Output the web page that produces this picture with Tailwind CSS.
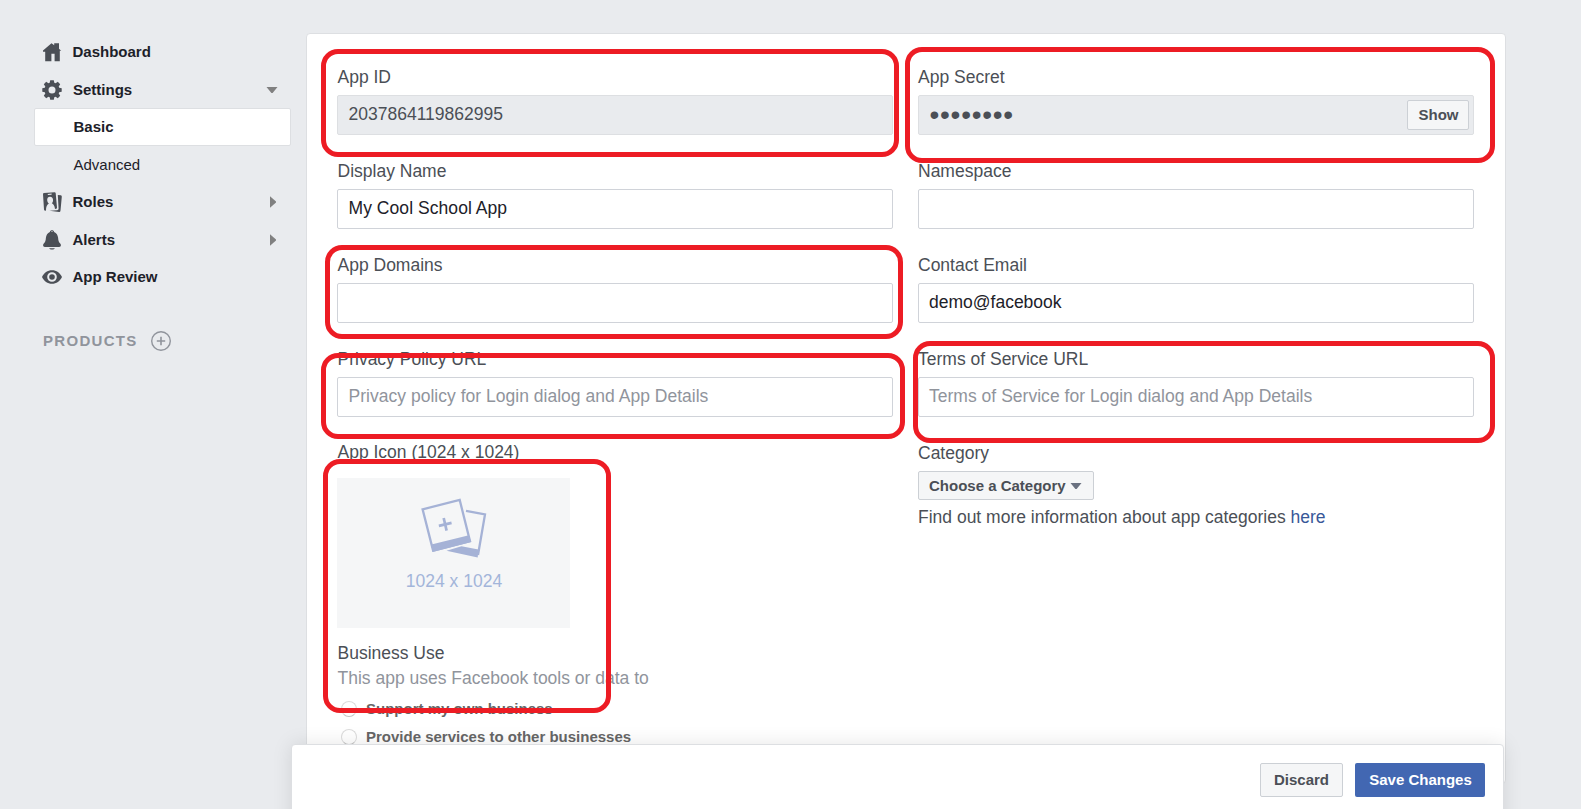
<!DOCTYPE html>
<html lang="en">
<head>
<meta charset="utf-8">
<title>App Settings</title>
<script src="https://cdn.jsdelivr.net/npm/@tailwindcss/browser@4"></script>
</head>
<body class="relative h-[809px] w-[1581px] overflow-hidden bg-[#e9ebee] font-['Liberation_Sans',Arial,sans-serif] text-[17.5px] leading-6 text-[#4b4f56]">
<div class="flex items-start pt-[33px]">
  <!-- Sidebar -->
  <nav class="ml-[34px] w-[272px] shrink-0 text-[15px] font-bold text-[#1d2129]">
    <a class="flex h-[38px] items-center pl-2">
      <svg class="mr-[10.5px] h-5 w-5" viewBox="0 0 20 20" fill="#4b4f56"><path d="M9.5 1.2 L12.2 3.2 V1.2 H17 V6.7 L19.2 8.8 H17.800 V19.3 H12.6 V11.8 H9.4 V19.3 H3.2 V9.8 H1 V8.6 Z"/></svg>
      <span>Dashboard</span>
    </a>
    <a class="flex h-[37px] items-center pt-px pl-2">
      <svg class="mr-[11px] h-5 w-5" viewBox="0 0 20 20" fill="#4b4f56"><path fill-rule="evenodd" d="M8.2 0.3h3.6l.5 2.5 1.3.5 2.2-1.5 2.4 2.4-1.5 2.2.5 1.3 2.5.5v3.600l-2.5.5-.5 1.3 1.5 2.2-2.4 2.4-2.2-1.5-1.3.5-.5 2.5H8.2l-.5-2.5-1.3-.5-2.2 1.500-2.4-2.4 1.5-2.2-.5-1.3-2.5-.5V8.2l2.5-.5.5-1.3-1.5-2.2 2.4-2.4 2.2 1.5 1.3-.5zM10 6.5a3.5 3.5 0 1 0 0 7 3.5 3.5 0 0 0 0-7z"/></svg>
      <span>Settings</span>
      <svg class="mr-[28px] ml-auto h-[6px] w-[12px]" viewBox="0 0 12 6" fill="#808080"><path d="M.5 0h11L6.6 6H5.4z"/></svg>
    </a>
    <a class="flex h-[38px] w-[257px] items-center rounded-[2px] border border-[#dddfe2] bg-white pl-[38.5px]">Basic</a>
    <a class="flex h-[37px] items-center pl-[39.500px] font-normal">Advanced</a>
    <a class="flex h-[37px] items-center pt-px pl-2">
      <svg class="mr-[10.5px] h-5 w-5" viewBox="0 0 20 20" fill="#4b4f56"><path fill-rule="evenodd" d="M2 1 12.600.2Q13.600.2 13.700 1.200L15 15.400Q15 16.600 14 16.800L13 17C12.600 13.600 11.500 11.900 9.800 11.200 10.900 10.200 11.200 8.800 11 7.400 10.700 5.500 9.500 4.600 7.900 4.700 6 4.900 5 6.200 5.200 8.200 5.300 9.700 6 10.900 6.900 11.500 5 12.500 4 14.500 4 18.600L3.200 18.700Q2.100 18.800 2 17.600L1 2.200Q1 1.100 2 1zM5.800 1.900V3L9.600 2.700V1.600z"/><path d="M15.800 3 18.800 3.300Q19.900 3.600 19.800 4.700L18.500 18.400Q18.300 20 17.200 19.900L7.500 18.800 15.200 18.300Q16.600 18 16.600 16.700z"/></svg>
      <span>Roles</span>
      <svg class="mr-[30px] ml-auto h-[12px] w-[6px]" viewBox="0 0 6 12" fill="#808080"><path d="M0 .3 6 5.5v1L0 11.7z"/></svg>
    </a>
    <a class="flex h-[38px] items-center pt-[2px] pl-2">
      <svg class="mr-[10.5px] h-5 w-5" viewBox="0 0 20 20" fill="#4b4f56"><path fill-rule="evenodd" d="M7.900 2C7.900-.3 12.100-.3 12.100 2 14.600 3 15.800 5.3 16.100 7.800 16.300 10.800 16.800 12 18.2 13.600 19.600 15.200 18.700 17 17.2 17H2.800C1.3 17 .4 15.200 1.800 13.600 3.200 12 3.700 10.800 3.900 7.800 4.200 5.300 5.400 3 7.900 2zM9.100 1.900H10.900C10.900 1 9.100 1 9.100 1.900z"/><path d="M7.200 18.200H12.800C12.500 20 7.500 20 7.200 18.200z"/></svg>
      <span>Alerts</span>
      <svg class="mr-[30px] ml-auto h-[12px] w-[6px]" viewBox="0 0 6 12" fill="#808080"><path d="M0 .3 6 5.5v1L0 11.7z"/></svg>
    </a>
    <a class="flex h-[37px] items-center pl-2">
      <svg class="mr-[10.5px] h-5 w-5" viewBox="0 0 20 20" fill="#4b4f56"><path fill-rule="evenodd" d="M0 10C2 5.800 5.500 3.200 10 3.200S18 5.800 20 10C18 14.200 14.500 16.800 10 16.800S2 14.200 0 10zM10 5.200a4.800 4.800 0 1 0 0 9.600 4.800 4.800 0 0 0 0-9.600z"/><circle cx="10" cy="10" r="2.800"/></svg>
      <span>App Review</span>
    </a>
    <div class="mt-[27px] flex h-[38px] items-center pl-[9px] text-[#90949c]">
      <span class="tracking-[1.3px]">PRODUCTS</span>
      <svg class="ml-[13.500px] h-5 w-5" viewBox="0 0 20 20" fill="none" stroke="#90949c"><circle cx="10" cy="10" r="9.300" stroke-width="1.400"/><path d="M10 5.800v8.400M5.800 10h8.400" stroke-width="1.600"/></svg>
    </div>
  </nav>

  <!-- Settings form -->
  <main class="h-[751px] w-[1200px] shrink-0 rounded-[4px] border border-[#dddfe2] bg-white pt-[31px] pl-[30px]">
    <div class="grid grid-cols-[556px_556px] gap-x-[25px]">
      <div class="h-[94px]">
        <div class="pl-[0.5px]">App ID</div>
        <div class="mt-[6px] flex h-10 items-center rounded-[2px] border border-[#dddfe2] bg-[#e9ebee] pb-[2px] pl-[10.5px]">2037864119862995</div>
      </div>
      <div class="h-[94px]">
        <div>App Secret</div>
        <div class="mt-[6px] flex h-10 items-center justify-between rounded-[2px] border border-[#dddfe2] bg-[#e9ebee] pr-1 pl-[10.500px]">
          <span class="text-[28px] tracking-[0.75px]">••••••••</span>
          <span class="flex h-[30px] w-[62px] items-center justify-center rounded-[2px] border border-[#ccd0d5] bg-[#f5f6f7] pl-px text-[15px] font-bold">Show</span>
        </div>
      </div>
      <div class="h-[94px]">
        <div class="pl-[0.5px]">Display Name</div>
        <div class="mt-[6px] flex h-10 items-center rounded-[2px] border border-[#d0d3d9] pb-[2px] pl-[10.5px] tracking-[0.06px] text-[#1d2129]">My Cool School App</div>
      </div>
      <div class="h-[94px]">
        <div>Namespace</div>
        <div class="mt-[6px] h-10 rounded-[2px] border border-[#d0d3d9]"></div>
      </div>
      <div class="h-[94px]">
        <div class="pl-[0.5px]">App Domains</div>
        <div class="mt-[6px] h-10 rounded-[2px] border border-[#d0d3d9]"></div>
      </div>
      <div class="h-[94px]">
        <div>Contact Email</div>
        <div class="mt-[6px] flex h-10 items-center rounded-[2px] border border-[#d0d3d9] pb-[2px] pl-[10px] text-[#1d2129]">demo@facebook</div>
      </div>
      <div class="h-[94px]">
        <div class="pl-[0.5px]">Privacy Policy URL</div>
        <div class="mt-[6px] flex h-10 items-center rounded-[2px] border border-[#d0d3d9] pb-[2px] pl-[10.5px] tracking-[0.02px] text-[#90949c]">Privacy policy for Login dialog and App Details</div>
      </div>
      <div class="h-[94px]">
        <div>Terms of Service URL</div>
        <div class="mt-[6px] flex h-10 items-center rounded-[2px] border border-[#d0d3d9] pb-[2px] pl-[10px] tracking-[0.02px] text-[#90949c]">Terms of Service for Login dialog and App Details</div>
      </div>
      <div>
        <div class="-mt-px pl-[0.5px]">App Icon (1024 x 1024)</div>
        <div class="mt-[14px] mb-[13px] h-[150px] w-[233px] bg-[#f5f6f7] pt-[18px] text-center text-[#a3b5da]">
          <svg class="mx-auto block h-[64px] w-[70px]" viewBox="0 0 70 64"><g fill="none" stroke="#a5b2d6" stroke-width="2.300"><path d="M3.600 13.300 40.700 3.900 51 45.200 14.100 54.600z"/><path d="M47 14.800 66 18.400 59 59"/></g><g fill="#a5b2d6"><path d="M12.400 48.400 49.900 39.200 52.200 45.900 13.700 55.900z"/><path d="M27.500 54.800 42.500 50.300 59.400 53.500 58.700 61.500z"/><path d="M24.800 21.800h2.700v13h-2.700z" transform="rotate(-13 26.200 28.300)"/><path d="M19.700 27h13v2.700h-13z" transform="rotate(-13 26.200 28.300)"/></g></svg>
          <div class="mt-[9px] pl-px">1024 x 1024</div>
        </div>
        <div class="pl-[0.5px]">Business Use</div>
        <div class="mt-[1px] pl-[0.5px] text-[#90949c]">This app uses Facebook tools or data to</div>
        <div class="mt-[5px] ml-1 flex h-[28px] items-center text-[15px] font-bold text-[#666]"><span class="mr-[9px] h-4 w-4 rounded-full border border-[#dcdcdc] border-b-[#c4c4c4] bg-white"></span>Support my own business</div>
        <div class="ml-1 flex h-[28px] items-center text-[15px] font-bold text-[#666]"><span class="mr-[9px] h-4 w-4 rounded-full border border-[#dcdcdc] border-b-[#c4c4c4] bg-white"></span>Provide services to other businesses</div>
      </div>
      <div>
        <div>Category</div>
        <div class="mt-[6px] flex h-[29px] w-[176px] items-center rounded-[2px] border border-[#ccd0d5] bg-[#f5f6f7] pl-[10px] text-[15px] font-bold">Choose a Category<svg class="ml-[4px] h-[6px] w-[12px]" viewBox="0 0 12 6" fill="#6a7180"><path d="M.5 0h11L6.600 6H5.400z"/></svg></div>
        <div class="mt-[5px]">Find out more information about app categories <a class="text-[#385898]">here</a></div>
      </div>
    </div>
  </main>
</div>

<!-- Sticky save bar -->
<footer class="absolute top-[744px] left-[291px] flex h-[90px] w-[1213px] items-start justify-end gap-3 rounded-t-[4px] border border-[#dddfe2] bg-white pt-[18px] pr-[18px] text-[15px] font-bold shadow-[0_0_20px_rgba(0,0,0,0.1)]">
  <span class="flex h-[34px] w-[83px] items-center justify-center rounded-[2px] border border-[#ccd0d5] bg-[#f5f6f7]">Discard</span>
  <span class="flex h-[34px] w-[130px] items-center justify-center rounded-[2px] bg-[#4267b2] pl-px text-white">Save Changes</span>
</footer>

<!-- Highlight outlines drawn over the form -->
<div class="absolute top-[49px] left-[321px] h-[108px] w-[578px] rounded-[17px] border-5 border-[#ed1c24]"></div>
<div class="absolute top-[47px] left-[905px] h-[116px] w-[590px] rounded-[17px] border-5 border-[#ed1c24]"></div>
<div class="absolute top-[245px] left-[325px] h-[94px] w-[578px] rounded-[17px] border-5 border-[#ed1c24]"></div>
<div class="absolute top-[353px] left-[321px] h-[86px] w-[584px] rounded-[17px] border-5 border-[#ed1c24]"></div>
<div class="absolute top-[341px] left-[913px] h-[102px] w-[582px] rounded-[17px] border-5 border-[#ed1c24]"></div>
<div class="absolute top-[459px] left-[323px] h-[254px] w-[288px] rounded-[17px] border-5 border-[#ed1c24]"></div>
</body>
</html>
